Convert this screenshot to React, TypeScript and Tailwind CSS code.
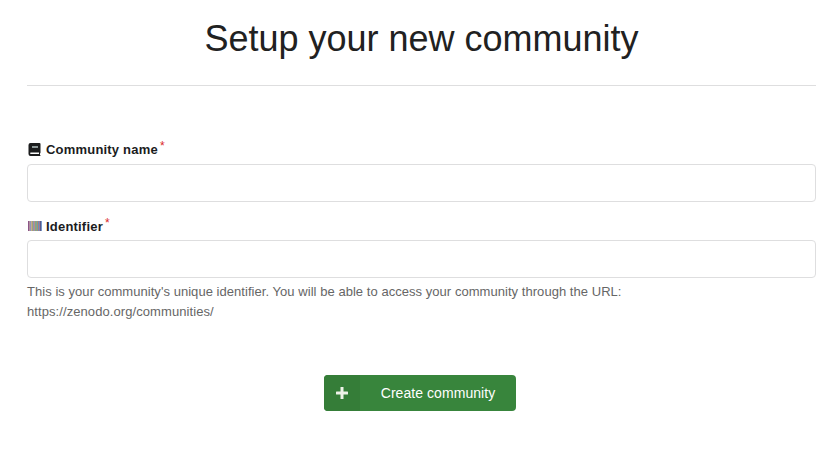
import React from "react";

function Field({ id, label, icon, labelClass, children }: { id: string; label: string; icon: React.ReactNode; labelClass: string; children?: React.ReactNode }) {
  return (
    <div>
      <label htmlFor={id} className={"flex h-[18px] items-center text-[13px] font-bold leading-[18px] tracking-[0.2px] text-[#1b1c1d] " + labelClass}>
        <span className="mr-1 flex h-[18px] w-[15px] justify-center">{icon}</span>
        {label}
        <span className="ml-[2px] -mt-2 text-[12px] font-normal tracking-normal text-[#db2828]">*</span>
      </label>
      <input id={id} type="text" className="block h-[38px] w-full rounded-[4px] border border-[#dededf] bg-white px-3 text-sm outline-none" />
      {children}
    </div>
  );
}

const bars = [
  "#8c5587", "#b08fa0", "#8f98b8", "#c8a890", "#a0a870", "#8f8fb8", "#b88f8a",
  "#80a888", "#7f9f9a", "#b08f68", "#6890b8", "#a0789a", "#58588a", "#7898c8",
];

export default function App() {
  return (
    <main className="h-[453px] bg-white pl-[27px] pr-[23px] pt-[17px] font-['Liberation_Sans',Arial,sans-serif]">
      <h1 className="text-center text-[36px] font-normal leading-[44px] text-[#212121]">Setup your new community</h1>
      <hr className="mt-6 border-[#dededf]" />
      <form className="pt-[55px]">
        <Field
          id="name"
          label="Community name"
          labelClass="mb-[5px]"
          icon={
            <svg className="mt-[2px]" width="13" height="13" viewBox="0 0 13 13">
              <path fill="#1b1c1d" d="M2.500 0h9q1 0 1 1v8.500q0 .5-.5 1v1.500q.5 0 .5 1h-10q-2 0-2-2V2q0-2 2-2Z" />
              <path fill="#8d9898" d="M4 3h6v2H4z" />
              <path fill="#fff" d="M2.500 9.500H11V11H2.500q-.8-.75 0-1.500Z" />
            </svg>
          }
        />
        <div className="h-4" />
        <Field
          id="identifier"
          label="Identifier"
          labelClass="mb-1"
          icon={
            <svg className="mt-[3px]" width="15" height="10" viewBox="-1 0 15 10" shapeRendering="crispEdges">
              {bars.map((color, i) => (
                <rect key={i} x={i} width="1" height="10" fill={color} />
              ))}
            </svg>
          }
        >
          <p className="mt-[4px] text-[13px] leading-5 tracking-[0.045px] text-[#666]">
            This is your community's unique identifier. You will be able to access your community through the URL:
            <br />
            <span className="tracking-[0.08px]">https://zenodo.org/communities/</span>
          </p>
        </Field>
        <div className="mt-[53px] flex justify-center pr-[3px]">
          <button type="button" className="flex h-9 w-[192px] overflow-hidden rounded-[4px] bg-[#38853c] text-sm text-white">
            <span className="flex h-full w-9 items-center justify-center bg-[#357d38]">
              <svg width="14" height="14" viewBox="0 0 14 14" fill="#eef2e8">
                <path d="M5.500 1h3v4.500h4q.5 0 .5.5v2q0 .5-.5.5h-4V13h-3V8.500h-4Q1 8.500 1 8V6q0-.5.5-.5h4z" />
              </svg>
            </span>
            <span className="flex h-full flex-1 items-center justify-center tracking-[0.06px]">Create community</span>
          </button>
        </div>
      </form>
    </main>
  );
}
